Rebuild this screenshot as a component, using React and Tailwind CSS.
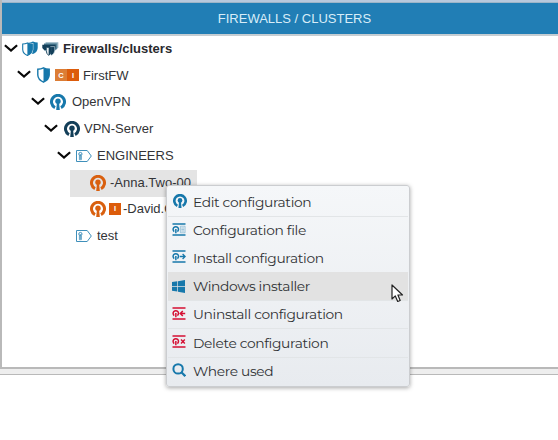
const LIGHT = '#1778ab';
const NAVY = '#133f59';
const ORANGE = '#d9600f';
const RED = '#d50f33';

function Chevron() {
  return (
    <svg width="14" height="9" viewBox="0 0 14 9" className="mb-px shrink-0" fill="none" stroke="#080808" strokeWidth="2.2">
      <path d="M.9 1.2 7 6.6l6.1-5.4" />
    </svg>
  );
}

function Vpn({ color, size = 16 }) {
  return (
    <svg width={size} height={size} viewBox="0 0 16 16" className="shrink-0">
      <path d="M5 13.6A6.5 6.5 0 1 1 11 13.6" fill="none" stroke={color} strokeWidth="3" />
      <circle cx="8" cy="7.3" r="2.7" fill={color} />
      <path d="M7 8h2l.8 8H6.2z" fill={color} />
    </svg>
  );
}

function Shield() {
  return (
    <svg width="13" height="16" viewBox="0 0 13 16" className="shrink-0">
      <path d="M.8 2.2Q4 2.2 6.5.8 9 2.2 12.2 2.2V8Q12 12.8 6.5 15.2 1 12.8.8 8Z" fill="#fff" stroke={LIGHT} strokeWidth="1.4" />
      <path d="M6.5 1Q9 2.2 12.2 2.2V8Q12 12.8 6.5 15.2Z" fill={LIGHT} />
    </svg>
  );
}

function Shields() {
  return (
    <svg width="16" height="15" viewBox="0 0 16 15" className="shrink-0">
      <path d="M6 1.4Q9 1.4 11 .5q2 .9 4.7.9V7Q15.4 11.3 11 13.1 6.2 11 6 7Z" fill={LIGHT} />
      <path d="M.7 3Q3.2 3 5.4 1.9 7.6 3 10.3 3V8.5Q10 12.7 5.4 14.4.9 12.7.7 8.5Z" fill="#fff" stroke="#fff" strokeWidth="2" />
      <path d="M.7 3Q3.2 3 5.4 1.9 7.6 3 10.3 3V8.5Q10 12.7 5.4 14.4.9 12.7.7 8.5Z" fill="#fff" stroke={LIGHT} strokeWidth="1.1" />
      <path d="M5.4 2Q7.6 3 10.3 3V8.5Q10 12.7 5.4 14.4Z" fill={LIGHT} />
    </svg>
  );
}

function ClusterShields() {
  return (
    <svg width="17" height="14" viewBox="0 0 17 14" className="shrink-0">
      <path d="M3.5.3h12.8v5L14.8 7.5H4z" fill="#8fb0bf" />
      <path d="M2 1.6h12.8v5L13 8.5H2z" fill="#4b7b91" />
      <path d="M.3 2.8H13.6v3.4L12 8H2.5Q.5 7 .3 5.4z" fill={NAVY} />
      <path d="M8.5 4.6h4.2v4.2q-.3 3-3 4.5L8 12z" fill={NAVY} stroke="#b7cbd5" strokeWidth=".7" />
      <path d="M4.2 5.3h5v3.5q-.2 3-2.5 4.6-2.3-1.6-2.5-4.6z" fill="#e8eff2" stroke={NAVY} strokeWidth=".9" />
      <path d="M6.7 5.3h2.5v3.5q-.2 3-2.5 4.6z" fill={NAVY} />
    </svg>
  );
}

function Badge({ letter, soft }) {
  return (
    <span className={`flex h-3 w-3 shrink-0 items-center justify-center text-[7.5px] font-bold leading-none text-white ${soft ? 'bg-[#dc7d35]' : 'bg-[#dc5c0b]'}`}>
      {letter}
    </span>
  );
}

function Tag() {
  return (
    <svg width="16" height="12" viewBox="0 0 16 12" className="shrink-0" fill="none" stroke="#3f8fba">
      <path d="M.5.5h10.7L15.3 6l-4.1 5.5H.5z" />
      <circle cx="4.4" cy="4" r="1.6" strokeWidth="1" />
      <path d="M3.4 5.5v4.2h2V5.5M4.4 4v5" strokeWidth=".8" />
    </svg>
  );
}

function Action({ kind, color }) {
  return (
    <svg width="14" height="13" viewBox="0 0 14 13" className="mb-[3px] shrink-0">
      <path d="M.5 1h13M.5 12h13" stroke={color} strokeWidth="1.4" />
      <path d="M2.2 8.6A2.7 2.7 0 1 1 5.4 8.6" fill="none" stroke={color} strokeWidth="1.5" />
      <path d="M3.1 6h1.5v4.2H3.1z" fill={color} />
      {kind === 'file' && (
        <g opacity=".5">
          <path d="M8.4 3.2h4.7v6.6H8.4z" fill="#dbe9f1" stroke={color} strokeWidth=".7" />
          <path d="M9.3 5h2.9M9.3 6.5h2.9M9.3 8h2.9" stroke={color} strokeWidth=".7" />
        </g>
      )}
      {kind === 'install' && <path d="M7.8 6.5h5M10.6 4l2.5 2.5L10.6 9" fill="none" stroke={color} strokeWidth="1.3" />}
      {kind === 'uninstall' && <path d="M13.2 6.5h-5M10.8 4 8.3 6.5 10.8 9" fill="none" stroke={color} strokeWidth="1.5" />}
      {kind === 'delete' && <path d="m9 4.5 3.8 4M12.8 4.5 9 8.5" stroke={color} strokeWidth="1.4" />}
    </svg>
  );
}

function Windows() {
  return (
    <svg width="13" height="13" viewBox="0 0 13 13" className="shrink-0" fill={LIGHT}>
      <path d="M0 2.1 5.3 1.3v4.8H0zM6 1.2 13 .1v6H6zM0 6.8h5.3v4.8L0 10.8zM6 6.8h7v6.1l-7-1.1z" />
    </svg>
  );
}

function Search() {
  return (
    <svg width="14" height="14" viewBox="0 0 14 14" className="mb-[3px] shrink-0" fill="none" stroke={LIGHT} strokeWidth="2">
      <circle cx="6.1" cy="5.9" r="4.7" />
      <path d="m9.4 9.2 3.9 4" strokeWidth="2.2" />
    </svg>
  );
}

function Row({ className, children }) {
  return <div className={`flex h-[26.75px] items-center whitespace-nowrap ${className}`}>{children}</div>;
}

function Item({ icon, label, className, line }) {
  return (
    <div className={`flex shrink-0 items-center border-b pl-1 ${line ? 'border-[#e2e5e7]' : 'border-transparent'} ${className}`}>
      <span className="flex w-[21px] shrink-0">{icon}</span>
      <span className="whitespace-nowrap">{label}</span>
    </div>
  );
}

export default function App() {
  return (
    <div className="relative h-[440px] w-[558px] overflow-hidden bg-white text-[13px] text-[#333437] [font-family:'Liberation_Sans',Arial,sans-serif]">
      <div className="flex h-[369px] flex-col border-b-2 border-l-2 border-[#b9b9b9]">
        <div className="h-[3px] shrink-0 border-b border-[#9db5c8] bg-[#b8c9dd]" />
        <header className="flex h-[31px] shrink-0 items-center justify-center bg-[#217eb5] pl-[29px] text-[13px] text-[#d8edf8]">
          FIREWALLS / CLUSTERS
        </header>
        <div className="h-[2px] shrink-0 bg-[#c5cdd2]" />
        <div className="-mt-[0.75px]">
          <Row className="pl-[2px] font-bold text-[#29292e]">
            <Chevron /><span className="ml-1 flex"><Shields /></span><span className="mx-1 flex"><ClusterShields /></span>Firewalls/clusters
          </Row>
          <Row className="pl-[15px]">
            <Chevron /><span className="ml-[6px] mr-[5px] flex"><Shield /></span><Badge letter="C" soft /><Badge letter="I" /><span className="ml-1">FirstFW</span>
          </Row>
          <Row className="pl-[29px]">
            <Chevron /><span className="ml-[5px] mr-[6px] flex"><Vpn color={LIGHT} /></span>OpenVPN
          </Row>
          <Row className="pl-[42px]">
            <Chevron /><span className="ml-[6px] mr-1 flex"><Vpn color={NAVY} /></span>VPN-Server
          </Row>
          <Row className="pl-[55px]">
            <Chevron /><span className="ml-[5px] mr-[5px] flex"><Tag /></span>ENGINEERS
          </Row>
          <Row className="ml-[68px] mt-px -mb-px w-[127px] bg-[#e4e4e4] pb-px pl-5">
            <span className="mr-1 flex"><Vpn color={ORANGE} /></span>-Anna.Two-00
          </Row>
          <Row className="pl-[88px]">
            <span className="mr-[3px] flex"><Vpn color={ORANGE} /></span><Badge letter="I" /><span className="ml-[2px]">-David.Office</span>
          </Row>
          <Row className="pl-[74px]">
            <span className="mr-[5px] flex"><Tag /></span>test
          </Row>
        </div>
      </div>
      <div className="h-[6px] border-b border-[#b9b9b9] bg-[#eeeeee]" />

      <div className="absolute left-[166px] top-[185px] flex h-[202px] w-[244px] flex-col rounded-[3px] border border-[#cbcdd0] bg-linear-to-b from-[#f5f7f9] to-[#e8ebef] px-px pt-[3px] text-[13.8px] tracking-[-0.34px] text-[#303235] shadow-[0_1px_4px_rgba(0,0,0,0.35)] [font-family:Montserrat,Lato,sans-serif]">
        <Item line className="h-[28px]" icon={<span className="mb-[4px] ml-px flex"><Vpn color={LIGHT} size={14} /></span>} label="Edit configuration" />
        <Item className="h-[28px]" icon={<Action kind="file" color={LIGHT} />} label="Configuration file" />
        <Item className="h-[27px]" icon={<Action kind="install" color={LIGHT} />} label="Install configuration" />
        <Item line className="h-[29px] bg-[#e2e2e2]" icon={<Windows />} label="Windows installer" />
        <Item line className="h-[28px]" icon={<Action kind="uninstall" color={RED} />} label="Uninstall configuration" />
        <Item line className="h-[29px]" icon={<Action kind="delete" color={RED} />} label="Delete configuration" />
        <Item className="h-[28px]" icon={<Search />} label="Where used" />
      </div>

      <svg width="13" height="19" viewBox="0 0 13 19" className="absolute left-[391px] top-[284px]">
        <path d="M1 1v14l3.3-3.1 2.4 5.6 2.5-1-2.3-5.5h4.6z" fill="#fff" stroke="#222" strokeWidth="1.2" strokeLinejoin="round" />
      </svg>
    </div>
  );
}
